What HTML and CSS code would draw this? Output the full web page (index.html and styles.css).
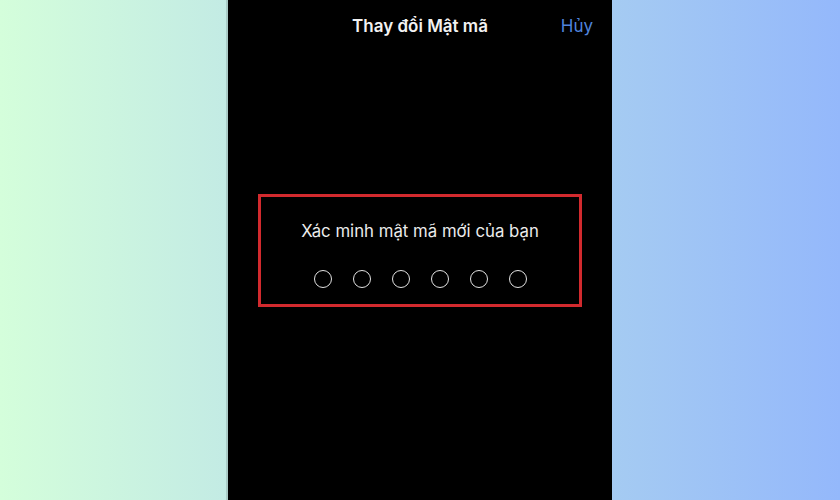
FILE: index.html
```html
<!DOCTYPE html>
<html lang="vi">
<head>
<meta charset="utf-8">
<link rel="stylesheet" href="styles.css">
</head>
<body>
<div class="page">
  <div class="side side-left"></div>
  <div class="phone">
    <div class="header">
      <span></span>
      <span class="title">Thay đổi Mật mã</span>
      <span class="cancel">Hủy</span>
    </div>
    <div class="box">
      <div class="prompt">Xác minh mật mã mới của bạn</div>
      <div class="dots">
        <span class="dot"></span><span class="dot"></span><span class="dot"></span><span class="dot"></span><span class="dot"></span><span class="dot"></span>
      </div>
    </div>
  </div>
  <div class="side side-right"></div>
</div>
</body>
</html>
```
FILE: styles.css
```css
html, body {
  margin: 0;
  padding: 0;
}
body {
  width: 840px;
  height: 500px;
  overflow: hidden;
  font-family: Inter, "Liberation Sans", sans-serif;
}
.page {
  display: flex;
  width: 840px;
  height: 500px;
  background: linear-gradient(to right, #d4fedb 0%, #c3ebe4 27%, #a5cbf2 73%, #94b8fb 100%);
}
.side {
  width: 228px;
  flex: none;
}
.side-left {
  box-shadow: inset -2px 0 0 rgba(120,140,140,0.35);
}
.phone {
  width: 384px;
  flex: none;
  background: #000;
  display: flex;
  flex-direction: column;
}
.header {
  display: grid;
  grid-template-columns: 1fr auto 1fr;
  align-items: center;
  height: 52px;
  padding: 0 19px;
}
.title {
  color: #f2f2f2;
  font-size: 17px;
  font-weight: 600;
}
.cancel {
  justify-self: end;
  color: #4f83dc;
  font-size: 17px;
}
.box {
  margin: 142px 30px 0;
  height: 107px;
  border: 3px solid #d22a2e;
  display: flex;
  flex-direction: column;
  align-items: center;
}
.prompt {
  margin-top: 23px;
  line-height: 22px;
  color: #ececec;
  font-size: 16.8px;
}
.dots {
  display: flex;
  gap: 21px;
  margin-top: 28px;
}
.dot {
  width: 16px;
  height: 16px;
  border: 1.5px solid #e2e2e2;
  border-radius: 50%;
}
```
